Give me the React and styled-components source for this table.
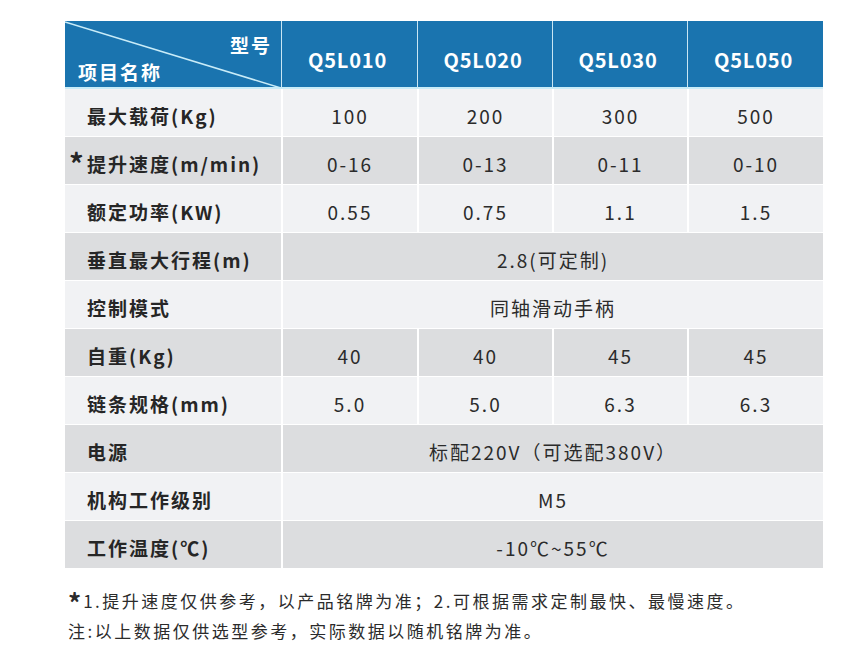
import React from "react"
import styled, { createGlobalStyle } from "styled-components"

const GlobalStyle = createGlobalStyle`
  html, body {
    margin: 0;
    padding: 0;
    background: #fff;
    font-family: "Noto Sans CJK SC", "Noto Sans", sans-serif;
    color: #2b2b2b;
  }
`

const Page = styled.div`
  width: 851px;
  height: 658px;
  padding: 21px 0 0 65px;
  box-sizing: border-box;
`

const Table = styled.div`
  width: 758px;
  display: grid;
  grid-template-columns: 216px 136px 135px 135px 136px;
`

const HeadCorner = styled.div`
  position: relative;
  height: 68px;
  background: #1a74af;
  border-bottom: 2px solid #c9ecf8;
  box-sizing: border-box;
  color: #fff;
  font-weight: 700;
  font-size: 19px;
  letter-spacing: 2px;
  overflow: hidden;
`

const Diagonal = styled.svg`
  position: absolute;
  left: 0;
  top: 0;
`

const CornerTop = styled.span`
  position: absolute;
  right: 9px;
  top: 10px;
`

const CornerBottom = styled.span`
  position: absolute;
  left: 13px;
  top: 37px;
`

const HeadCell = styled.div`
  height: 68px;
  background: #1a74af;
  border-bottom: 2px solid #c9ecf8;
  border-left: 1px solid #c9e6f3;
  box-sizing: border-box;
  color: #fff;
  font-weight: 700;
  font-size: 20px;
  letter-spacing: 0.8px;
  display: flex;
  align-items: center;
  justify-content: center;
  padding: 10px 0 0 0;
  text-indent: -4px;
`

const Label = styled.div`
  position: relative;
  height: 48px;
  background: ${(p) => (p.$dark ? "#dcdddf" : "#f1f2f4")};
  border-bottom: 1px solid #fff;
  box-sizing: border-box;
  display: flex;
  align-items: center;
  padding: 5px 0 0 22px;
  font-size: 19px;
  letter-spacing: 2px;
  font-weight: 700;
  color: #262626;
`

const Star = styled.span`
  position: absolute;
  left: 4px;
  top: 4px;
  font-size: 29px;
  font-weight: 700;
`

const Cell = styled.div`
  grid-column: span ${(p) => p.$span || 1};
  height: 48px;
  background: ${(p) => (p.$dark ? "#dcdddf" : "#f1f2f4")};
  border-bottom: 1px solid #fff;
  border-left: 2px solid #fff;
  box-sizing: border-box;
  display: flex;
  align-items: center;
  justify-content: center;
  padding-top: 5px;
  font-size: 19px;
  letter-spacing: 2px;
  color: #2b2b2b;
`

const Notes = styled.div`
  margin-top: 17px;
  margin-left: 3px;
  font-size: 17px;
  line-height: 29px;
  color: #2b2b2b;
  letter-spacing: 2.5px;
`

const NoteStar = styled.span`
  font-size: 26px;
  font-weight: 700;
  vertical-align: -5px;
  letter-spacing: 0;
  margin-right: 2px;
`

const models = ["Q5L010", "Q5L020", "Q5L030", "Q5L050"]

const rows = [
  { label: "最大载荷(Kg)", values: ["100", "200", "300", "500"] },
  { label: "提升速度(m/min)", star: true, values: ["0-16", "0-13", "0-11", "0-10"] },
  { label: "额定功率(KW)", values: ["0.55", "0.75", "1.1", "1.5"] },
  { label: "垂直最大行程(m)", all: "2.8(可定制)" },
  { label: "控制模式", all: "同轴滑动手柄" },
  { label: "自重(Kg)", values: ["40", "40", "45", "45"] },
  { label: "链条规格(mm)", values: ["5.0", "5.0", "6.3", "6.3"] },
  { label: "电源", all: "标配220V（可选配380V）" },
  { label: "机构工作级别", all: "M5" },
  { label: "工作温度(℃)", all: "-10℃~55℃" },
]

export default function App() {
  return (
    <Page>
      <GlobalStyle />
      <Table>
        <HeadCorner>
          <Diagonal width="216" height="68">
            <line x1="0" y1="1" x2="216" y2="67" stroke="#c9ecf8" strokeWidth="1.5" />
          </Diagonal>
          <CornerTop>型号</CornerTop>
          <CornerBottom>项目名称</CornerBottom>
        </HeadCorner>
        {models.map((m) => (
          <HeadCell key={m}>{m}</HeadCell>
        ))}
        {rows.map((r, i) => {
          const dark = i % 2 === 1
          return (
            <React.Fragment key={r.label}>
              <Label $dark={dark}>
                {r.star && <Star>*</Star>}
                {r.label}
              </Label>
              {r.all ? (
                <Cell $dark={dark} $span={4}>
                  {r.all}
                </Cell>
              ) : (
                r.values.map((v, j) => (
                  <Cell key={j} $dark={dark}>
                    {v}
                  </Cell>
                ))
              )}
            </React.Fragment>
          )
        })}
      </Table>
      <Notes>
        <div>
          <NoteStar>*</NoteStar>1.提升速度仅供参考，以产品铭牌为准；2.可根据需求定制最快、最慢速度。
        </div>
        <div>注:以上数据仅供选型参考，实际数据以随机铭牌为准。</div>
      </Notes>
    </Page>
  )
}
